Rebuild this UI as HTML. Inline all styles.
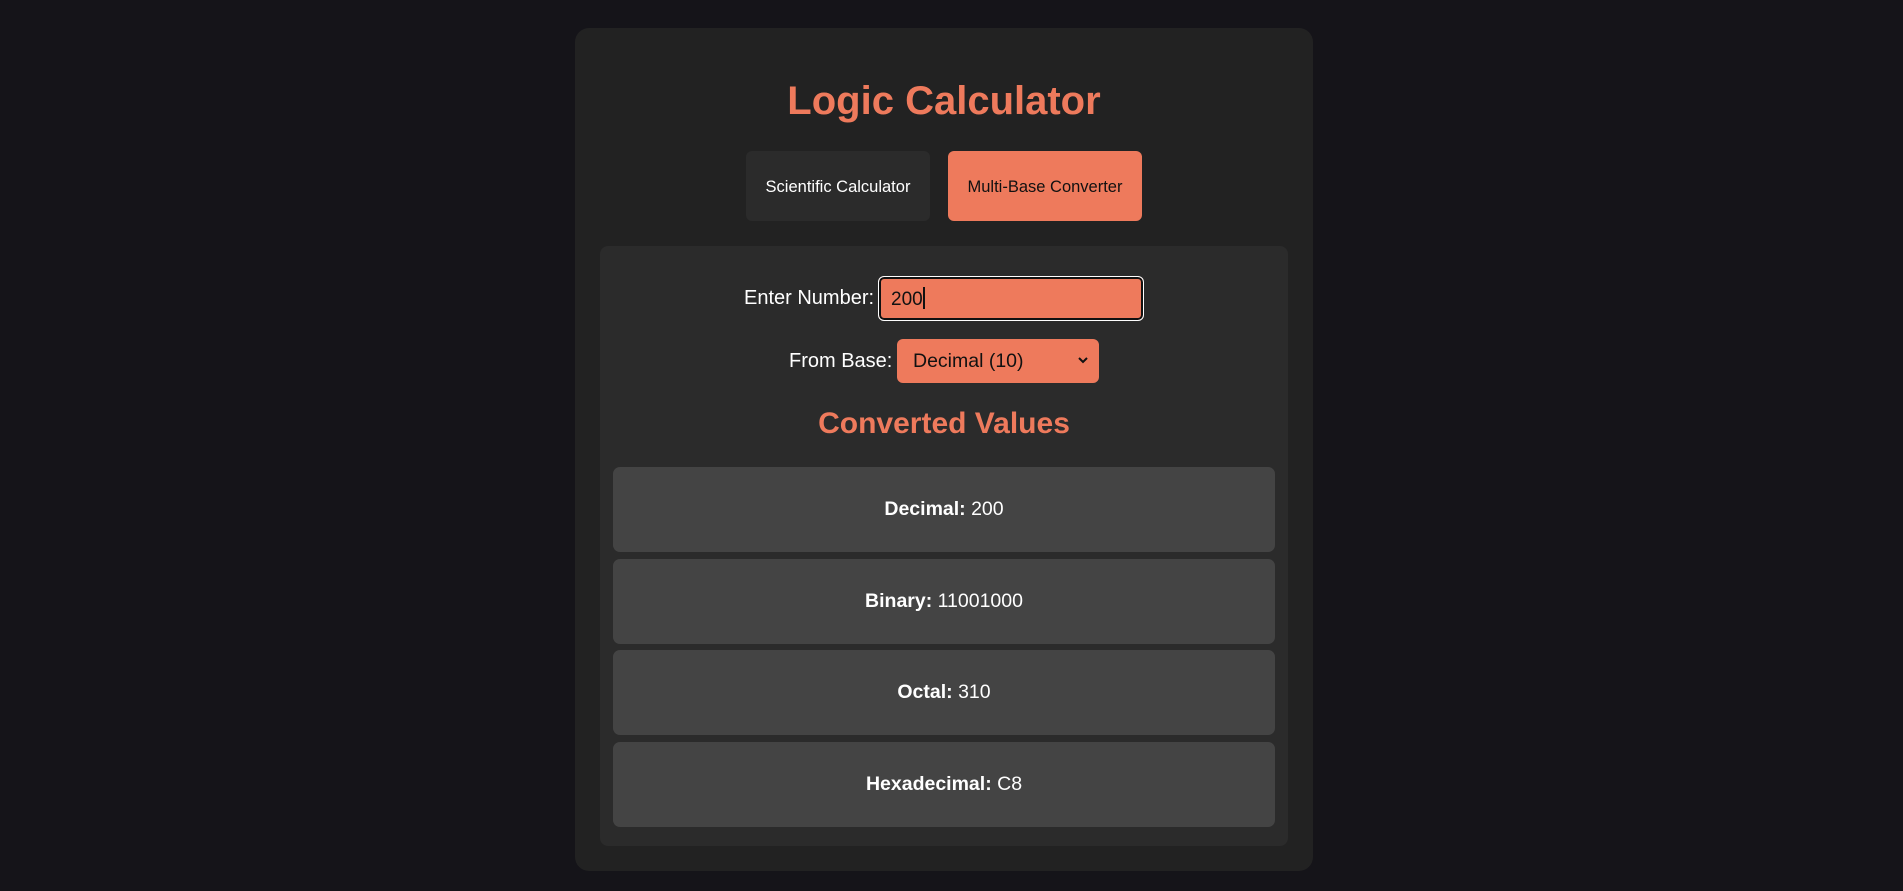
<!DOCTYPE html>
<html><head><style>
*{box-sizing:border-box;margin:0;padding:0}
body{width:1903px;height:891px;background:#151419;font-family:"Liberation Sans",Arial,sans-serif;position:relative;overflow:hidden;color:#fff}
.card{position:absolute;left:575px;top:28px;width:738px;height:843px;background:#222;border-radius:14px}
h1{position:absolute;left:575px;width:738px;top:78px;text-align:center;color:#ee7a5c;font-size:40px;font-weight:bold;line-height:46px}
.btn{position:absolute;top:151px;height:70px;border-radius:6px;font-size:16.5px;display:flex;align-items:center;justify-content:center;padding-top:2px}
.b1{left:746px;width:184px;background:#2b2b2b;color:#fff}
.b2{left:948px;width:194px;background:#ee7a5c;color:#111}
.panel{position:absolute;left:600px;top:246px;width:688px;height:600px;background:#2b2b2b;border-radius:8px}
.lbl{position:absolute;font-size:20px;color:#fff;line-height:22px}
.inp{position:absolute;left:878px;top:276px;width:266px;height:45px;background:#ee7a5c;border:1px solid #fff;border-radius:6px;box-shadow:inset 0 0 0 2px #111;font-size:19px;color:#111;padding:10px 0 0 12px}
.caret{display:inline-block;width:2px;height:22px;background:#111;vertical-align:-4px}
.sel{position:absolute;left:897px;top:339px;width:202px;height:44px;background:#ee7a5c;border-radius:6px;font-size:19.5px;color:#111;padding:11px 0 0 16px}
.chev{position:absolute;right:10px;top:16px}
h2{position:absolute;left:575px;width:738px;top:407px;text-align:center;color:#ee7a5c;font-size:30px;font-weight:bold;line-height:34px}
.res{position:absolute;left:613px;width:662px;height:85px;background:#444;border-radius:7px;font-size:19.5px;display:flex;align-items:center;justify-content:center;color:#fff}
</style></head><body>
<div class="card"></div>
<h1>Logic Calculator</h1>
<div class="btn b1">Scientific Calculator</div>
<div class="btn b2">Multi-Base Converter</div>
<div class="panel"></div>
<div class="lbl" style="left:744px;top:287px">Enter Number:</div>
<div class="inp">200<span class="caret"></span></div>
<div class="lbl" style="left:789px;top:350px">From Base:</div>
<div class="sel">Decimal (10)<svg class="chev" width="12" height="10" viewBox="0 0 12 10"><path d="M2 3 L6 7 L10 3" stroke="#111" stroke-width="2" fill="none"/></svg></div>
<h2>Converted Values</h2>
<div class="res" style="top:467px"><b>Decimal:</b>&nbsp;200</div>
<div class="res" style="top:559px"><b>Binary:</b>&nbsp;11001000</div>
<div class="res" style="top:650px"><b>Octal:</b>&nbsp;310</div>
<div class="res" style="top:742px"><b>Hexadecimal:</b>&nbsp;C8</div>
</body></html>
